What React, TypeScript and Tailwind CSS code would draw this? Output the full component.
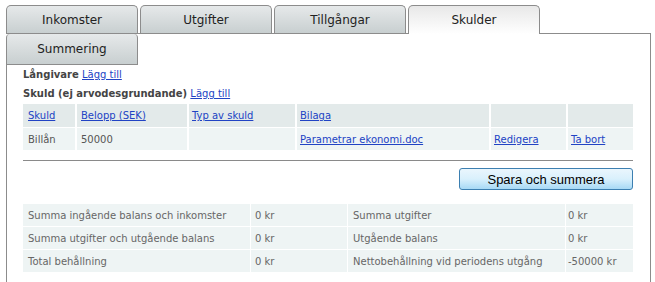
import React from "react";

const tabBase =
  "h-[28px] w-[132px] border border-b-0 border-[#8c8c8c] rounded-t-[5px] flex items-center justify-center text-[12px] text-[#222]";
const inactive = "bg-gradient-to-b from-[#e6e9ea] to-[#c8cfd0]";
const active = "bg-gradient-to-b from-[#e8e8e8] to-white relative z-10 -mb-px h-[29px]";

const link = "text-[#2143c4] underline";

export default function App() {
  const font = { fontFamily: '"DejaVu Sans", Verdana, sans-serif' };
  return (
    <div className="w-[655px] h-[282px] bg-white overflow-hidden pt-[5px]" style={font}>
      <div className="flex gap-[2px] pl-[6px] items-end">
        <div className={`${tabBase} ${inactive}`}>Inkomster</div>
        <div className={`${tabBase} ${inactive}`}>Utgifter</div>
        <div className={`${tabBase} ${inactive}`}>Tillgångar</div>
        <div className={`${tabBase} ${active}`}>Skulder</div>
      </div>
      <div className="ml-[6px] w-[645px] border-t border-r border-[#8c8c8c]">
        <div className="h-[31px] w-[132px] border-l border-r border-b border-[#8c8c8c] rounded-t-[4px] flex items-center justify-center text-[12px] text-[#222] bg-gradient-to-b from-[#e6e9ea] to-[#c8cfd0]">
          Summering
        </div>
        <div className="border-l border-[#8c8c8c] pl-[16px] pr-[17px] h-[230px]">
          <div className="text-[10px] leading-[19px] text-[#444]">
            <div>
              <span className="font-bold">Långivare</span> <span className={link}>Lägg till</span>
            </div>
            <div>
              <span className="font-bold">Skuld (ej arvodesgrundande)</span>{" "}
              <span className={link}>Lägg till</span>
            </div>
          </div>
          <div className="mt-[1px] grid grid-cols-[52px_110px_106px_192px_75px_65px] gap-x-[2px] gap-y-px text-[10px] text-[#555]">
            <div className="h-[23px] bg-[#e3eaea] flex items-center pl-[5px]"><span className={link}>Skuld</span></div>
            <div className="h-[23px] bg-[#e3eaea] flex items-center pl-[4px]"><span className={link}>Belopp (SEK)</span></div>
            <div className="h-[23px] bg-[#e3eaea] flex items-center pl-[3px]"><span className={link}>Typ av skuld</span></div>
            <div className="h-[23px] bg-[#e3eaea] flex items-center pl-[3px]"><span className={link}>Bilaga</span></div>
            <div className="h-[23px] bg-[#e3eaea]"></div>
            <div className="h-[23px] bg-[#e3eaea]"></div>
            <div className="h-[22px] bg-[#eef4f4] flex items-center pl-[5px]">Billån</div>
            <div className="h-[22px] bg-[#eef4f4] flex items-center pl-[4px]">50000</div>
            <div className="h-[22px] bg-[#eef4f4]"></div>
            <div className="h-[22px] bg-[#eef4f4] flex items-center pl-[3px]"><span className={link}>Parametrar ekonomi.doc</span></div>
            <div className="h-[22px] bg-[#eef4f4] flex items-center pl-[3px]"><span className={link}>Redigera</span></div>
            <div className="h-[22px] bg-[#eef4f4] flex items-center pl-[3px]"><span className={link}>Ta bort</span></div>
          </div>
          <div className="mt-[10px] border-t border-[#8a8a8a]"></div>
          <div className="mt-[7px] flex justify-end">
            <button
              className="h-[22px] w-[174px] rounded-[3px] border border-[#3c7fb1] bg-gradient-to-b from-[#eaf6fd] via-[#d9f0fc] to-[#a7d9f5] text-[13px] text-black leading-none"
              style={{ fontFamily: '"Liberation Sans", Arial, sans-serif' }}
            >
              Spara och summera
            </button>
          </div>
          <div className="mt-[14px] grid grid-cols-[227px_96px_217px_67px] gap-x-px gap-y-px text-[10px] text-[#666]">
            {[
              ["Summa ingående balans och inkomster", "0 kr", "Summa utgifter", "0 kr"],
              ["Summa utgifter och utgående balans", "0 kr", "Utgående balans", "0 kr"],
              ["Total behållning", "0 kr", "Nettobehållning vid periodens utgång", "-50000 kr"],
            ].map((row, i) => (
              <React.Fragment key={i}>
                <div className="h-[22px] bg-[#eef4f4] flex items-center pl-[5px]">{row[0]}</div>
                <div className="h-[22px] bg-[#eef4f4] flex items-center pl-[4px]">{row[1]}</div>
                <div className="h-[22px] bg-[#eef4f4] flex items-center pl-[5px]">{row[2]}</div>
                <div className="h-[22px] bg-[#eef4f4] flex items-center pl-[2px]">{row[3]}</div>
              </React.Fragment>
            ))}
          </div>
        </div>
      </div>
    </div>
  );
}
